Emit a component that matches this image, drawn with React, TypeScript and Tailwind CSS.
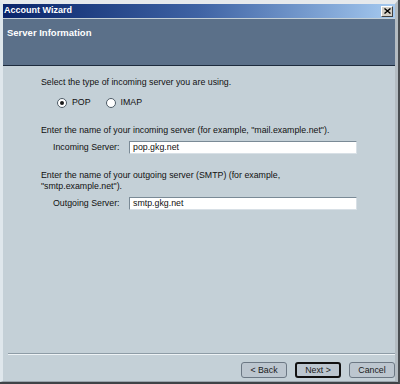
const font = { fontFamily: '"Liberation Sans", Arial, sans-serif' };

function Radio({ checked, label }: { checked?: boolean; label: string }) {
  return (
    <div className="flex items-center gap-[5px]">
      <span className="w-[10px] h-[10px] rounded-full bg-white border border-[#4d5b66] flex items-center justify-center">
        {checked && <span className="w-[4px] h-[4px] rounded-full bg-[#1a1a1a]" />}
      </span>
      <span>{label}</span>
    </div>
  );
}

function Field({ label, value }: { label: string; value: string }) {
  return (
    <div className="flex items-center pl-[12px]">
      <span className="w-[76px]">{label}</span>
      <div className="w-[228px] h-[13px] bg-white border border-[#7a8a96] border-b-[#d8e0e6] border-r-[#d8e0e6] flex items-center pl-[3px] leading-none">
        {value}
      </div>
    </div>
  );
}

function Btn({ label, primary }: { label: string; primary?: boolean }) {
  return (
    <button
      className={
        "w-[46px] h-[16px] rounded-[3px] bg-[#bcc6cf] text-[#1a1a1a] leading-none flex items-center justify-center " +
        (primary ? "border-2 border-[#111]" : "border border-[#6c7884]")
      }
    >
      {label}
    </button>
  );
}

export default function App() {
  return (
    <div className="w-[400px] h-[384px] border-r-[2px] border-r-[#4a4e52] border-b-[2px] border-b-[#3f4347] bg-[#4a4e52]">
      <div
        className="w-full h-full flex flex-col bg-[#c4d0d7] border-l-[3px] border-l-[#dfe7ec] border-t-[4px] border-t-[#e6e9ec] border-r-[3px] border-r-[#b4bcc2] border-b-[1px] border-b-[#9aa4ac] text-[8.8px] text-[#111]"
        style={font}
      >
        {/* title bar */}
        <div className="h-[14px] flex items-center justify-between bg-gradient-to-r from-[#0a246a] via-[#3f63a4] to-[#a6caf0] pl-[1px] pr-[2px]">
          <span className="text-white font-bold text-[9px]">Account Wizard</span>
          <span className="w-[12px] h-[11px] bg-[#d4d0c8] border border-t-white border-l-white border-r-[#404040] border-b-[#404040] flex items-center justify-center">
            <svg width="7" height="6" viewBox="0 0 7 6">
              <path d="M0.5 0.5 L6.5 5.5 M6.5 0.5 L0.5 5.5" stroke="#000" strokeWidth="1.4" />
            </svg>
          </span>
        </div>

        {/* header */}
        <div className="mt-[1px] h-[47px] bg-[#5b7089] border-b border-b-[#1d2b3d] pl-[4px] pt-[7px]">
          <span className="text-white font-bold text-[9.5px]">Server Information</span>
        </div>

        {/* body */}
        <div className="flex-1 flex flex-col pl-[38px] leading-[11px]">
          <p className="mt-[11px]">Select the type of incoming server you are using.</p>
          <div className="mt-[9px] pl-[16px] flex items-center gap-[15px]">
            <Radio checked label="POP" />
            <Radio label="IMAP" />
          </div>
          <p className="mt-[17px]">Enter the name of your incoming server (for example, "mail.example.net").</p>
          <div className="mt-[5px]">
            <Field label="Incoming Server:" value="pop.gkg.net" />
          </div>
          <p className="mt-[16px]">
            Enter the name of your outgoing server (SMTP) (for example,
            <br />
            "smtp.example.net").
          </p>
          <div className="mt-[5px]">
            <Field label="Outgoing Server:" value="smtp.gkg.net" />
          </div>
        </div>

        {/* footer */}
        <div className="ml-[5px] border-t border-t-[#8e9ca6] border-b border-b-[#eef3f6]" />
        <div className="flex justify-end gap-[8px] pr-[0px] pt-[7px] pb-[3px]">
          <Btn label="< Back" />
          <Btn label="Next >" primary />
          <Btn label="Cancel" />
        </div>
      </div>
    </div>
  );
}
